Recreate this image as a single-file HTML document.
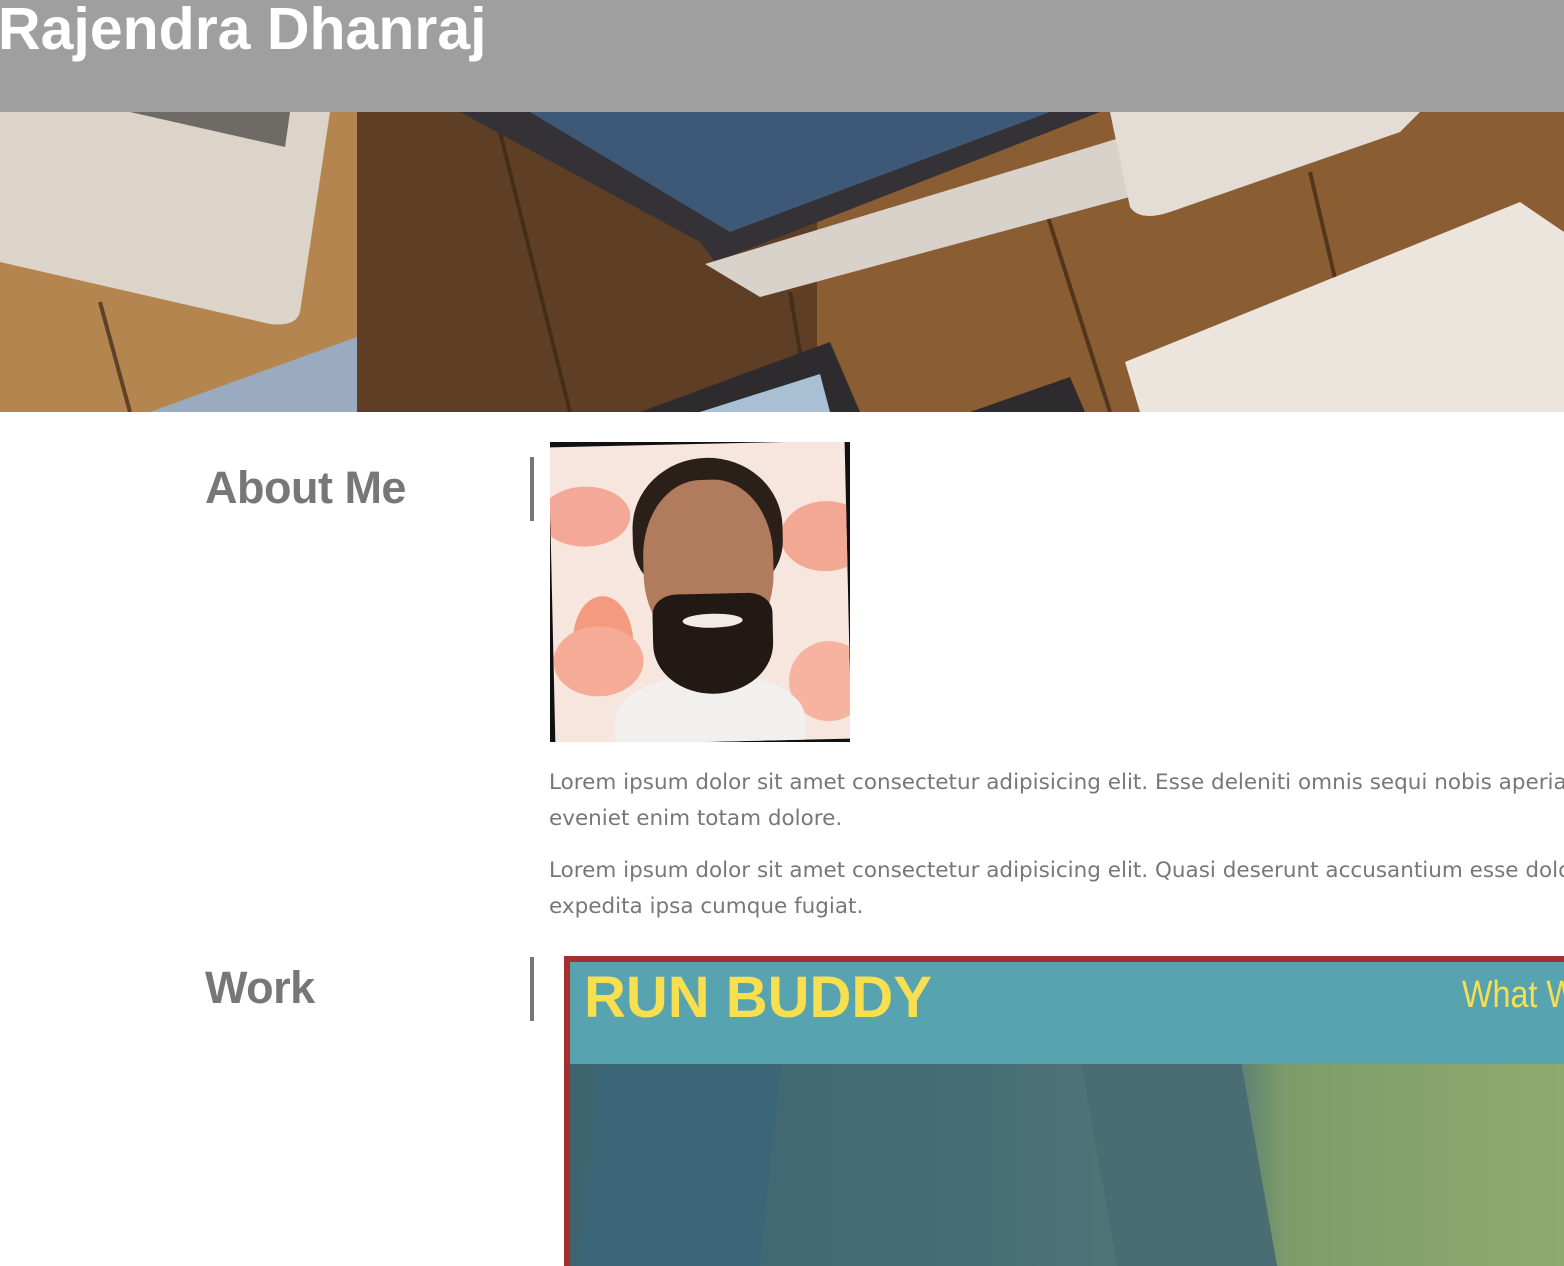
<!DOCTYPE html>
<html><head><meta charset="utf-8"><style>
html,body{margin:0;padding:0;width:1564px;height:1266px;overflow:hidden;background:#fff;font-family:"DejaVu Sans","Liberation Sans",sans-serif;}
header{position:absolute;left:0;top:0;width:1564px;height:112px;background:#9f9f9f;}
header h1{margin:0;position:absolute;left:-2px;top:-5px;font-family:"Liberation Sans",sans-serif;font-size:59px;font-weight:bold;color:#fff;letter-spacing:0px;}
.hero{position:absolute;left:0;top:112px;width:1564px;height:300px;overflow:hidden;}
h2{position:absolute;margin:0;font-family:"Liberation Sans",sans-serif;font-size:45px;font-weight:bold;color:#777;letter-spacing:-0.5px;}
.bar{position:absolute;left:530px;width:4px;background:#777;}
p{position:absolute;left:549px;margin:0;font-size:21.5px;line-height:36px;color:#777;white-space:nowrap;width:1015px;overflow:hidden;}
.work{position:absolute;left:564px;top:956px;width:1000px;height:310px;background:#a3302e;overflow:hidden;}
.work .in{position:absolute;left:6px;top:6px;right:0;bottom:0;overflow:hidden;background:linear-gradient(90deg,#3e6470 0%,#466d76 40%,#557a78 66%,#7d9c6a 72%,#8eab6e 100%);}
.work .top{position:absolute;left:0;top:0;right:0;height:102px;background:#58a3b0;}
.rb{position:absolute;left:14px;top:2px;font-family:"Liberation Sans",sans-serif;font-weight:bold;font-size:58px;color:#f8df4f;letter-spacing:0px;white-space:nowrap;}
.wh{position:absolute;left:892px;top:12px;font-family:"Liberation Sans",sans-serif;font-size:38px;color:#f8df4f;white-space:nowrap;transform:scaleX(0.85);transform-origin:left;}
</style></head><body>
<header><h1>Rajendra Dhanraj</h1></header>
<div class="hero">
<svg width="1564" height="300" viewBox="0 0 1564 300">
<rect width="1564" height="300" fill="#7a5330"/>
<rect x="0" width="357" height="300" fill="#b58550"/>
<rect x="357" width="460" height="300" fill="#5e3f26"/>
<rect x="817" width="747" height="300" fill="#8a5d33"/>
<g stroke="#3a2614" stroke-width="4" opacity=".7">
<line x1="100" y1="190" x2="130" y2="300"/><line x1="495" y1="0" x2="570" y2="300"/><line x1="1040" y1="80" x2="1110" y2="300"/><line x1="1310" y1="60" x2="1350" y2="230"/><line x1="790" y1="180" x2="810" y2="300"/>
</g>
<path d="M0,0 H330 L300,200 Q296,215 270,212 L0,150 Z" fill="#ddd4c9"/>
<polygon points="130,0 290,0 285,35" fill="#6e6a66"/>
<polygon points="357,225 357,300 150,300" fill="#9aabbf"/>
<polygon points="460,0 1100,0 715,150 700,130" fill="#343236"/>
<polygon points="530,0 1050,0 730,120" fill="#3e5878"/>
<polygon points="705,152 1205,0 1400,0 1370,20 760,185" fill="#d8d2cb"/>
<path d="M1110,0 H1420 L1400,20 L1170,100 Q1140,110 1130,95 Z" fill="#e4ddd6"/>
<polygon points="1125,250 1520,90 1564,120 1564,300 1140,300" fill="#ece5dd"/>
<polygon points="640,300 830,230 860,300" fill="#2d2b2e"/>
<polygon points="700,300 820,262 830,300" fill="#a9c0d4"/>
<polygon points="970,300 1070,265 1085,300" fill="#2d2b2e"/>
</svg>
</div>
<h2 style="left:205px;top:462px">About Me</h2>
<div class="bar" style="top:457px;height:64px"></div>
<div style="position:absolute;left:550px;top:442px;width:300px;height:300px;background:#111;overflow:hidden">
<div style="position:absolute;left:2px;top:2px;width:296px;height:298px;background:#f6e6de;transform:rotate(-1.3deg);overflow:hidden">
<div style="position:absolute;left:-10px;top:40px;width:90px;height:60px;border-radius:50%;background:#f4a898"></div>
<div style="position:absolute;left:20px;top:150px;width:60px;height:90px;border-radius:50%;background:#f39a7f"></div>
<div style="position:absolute;left:0px;top:180px;width:90px;height:70px;border-radius:50%;background:#f5ab96"></div>
<div style="position:absolute;left:230px;top:60px;width:90px;height:70px;border-radius:50%;background:#f3a894"></div>
<div style="position:absolute;left:235px;top:200px;width:80px;height:80px;border-radius:50%;background:#f5b3a0"></div>
<div style="position:absolute;left:60px;top:230px;width:190px;height:90px;border-radius:50% 50% 0 0;background:#f1f0ee"></div>
<div style="position:absolute;left:82px;top:14px;width:150px;height:140px;border-radius:50% 50% 40% 40%;background:#2b1f19"></div>
<div style="position:absolute;left:92px;top:36px;width:130px;height:170px;border-radius:45% 45% 45% 45%;background:#b17c5d"></div>
<div style="position:absolute;left:100px;top:150px;width:120px;height:100px;border-radius:20% 20% 50% 50%;background:#231914"></div>
<div style="position:absolute;left:130px;top:170px;width:60px;height:14px;border-radius:50%;background:#f2ece6"></div>
</div></div>
<p style="top:765px">Lorem ipsum dolor sit amet consectetur adipisicing elit. Esse deleniti omnis sequi nobis aperiam<br>eveniet enim totam dolore.</p>
<p style="top:853px">Lorem ipsum dolor sit amet consectetur adipisicing elit. Quasi deserunt accusantium esse dolores<br>expedita ipsa cumque fugiat.</p>
<h2 style="left:205px;top:962px">Work</h2>
<div class="bar" style="top:957px;height:64px"></div>
<div class="work"><div class="in">
<div style="position:absolute;left:20px;top:102px;width:180px;height:210px;background:#3a6677;transform:skewX(-6deg)"></div>
<div style="position:absolute;left:530px;top:102px;width:160px;height:210px;background:#4a6c73;transform:skewX(10deg)"></div>
<div class="top"><div class="rb">RUN BUDDY</div><div class="wh">What W</div></div>
</div></div>
</body></html>
